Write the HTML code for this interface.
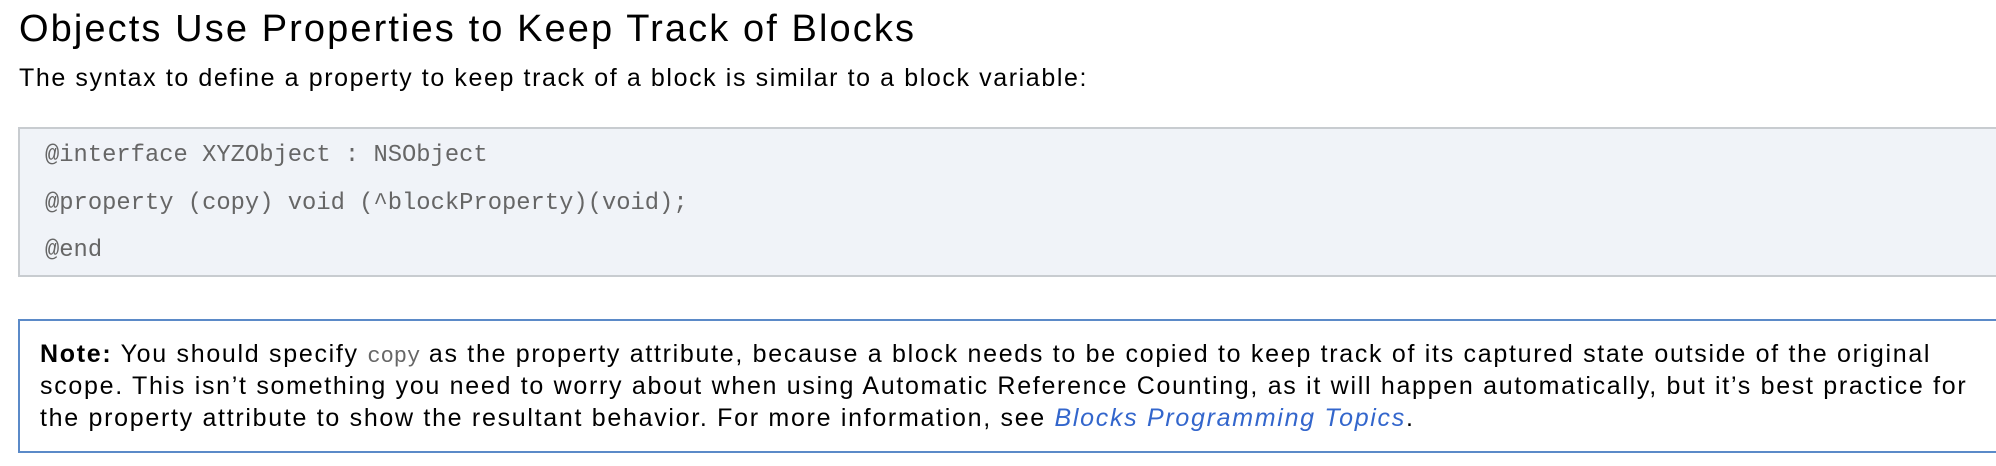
<!DOCTYPE html>
<html><head><meta charset="utf-8"><style>
body{margin:0;width:1996px;height:466px;overflow:hidden;background:#fff;font-family:"Liberation Sans",sans-serif;color:#000;position:relative}
.a{position:absolute;white-space:nowrap}
h1{position:absolute;left:19px;top:5px;margin:0;font-weight:normal;font-size:38px;line-height:48px;white-space:nowrap;letter-spacing:2.1px}
.sub{left:19px;top:63px;font-size:25px;line-height:30px;letter-spacing:1.6px}
.code{position:absolute;left:18px;top:127px;width:2000px;height:146px;background:#f0f3f8;border:2px solid #c8ccd0}
.c{font-family:"Liberation Mono",monospace;font-size:23.8px;color:#666;left:45px}
.note{position:absolute;left:18px;top:319px;width:2000px;height:130px;border:2px solid #5b8ac8}
.n{left:40px;font-size:25px;line-height:30px;letter-spacing:1.7px}
code{font-family:"Liberation Mono",monospace;color:#666;font-size:22px;letter-spacing:0}
a{color:#3366cc;font-style:italic;text-decoration:none}
</style></head><body>
<h1>Objects Use Properties to Keep Track of Blocks</h1>
<div class="a sub">The syntax to define a property to keep track of a block is similar to a block variable:</div>
<div class="code"></div>
<div class="a c" style="top:142px">@interface XYZObject : NSObject</div>
<div class="a c" style="top:190px">@property (copy) void (^blockProperty)(void);</div>
<div class="a c" style="top:237px">@end</div>
<div class="note"></div>
<div class="a n" style="top:339px"><b>Note:</b> You should specify <code>copy</code> as the property attribute, because a block needs to be copied to keep track of its captured state outside of the original</div>
<div class="a n" style="top:371px">scope. This isn’t something you need to worry about when using Automatic Reference Counting, as it will happen automatically, but it’s best practice for</div>
<div class="a n" style="top:403px">the property attribute to show the resultant behavior. For more information, see <a>Blocks Programming Topics</a>.</div>
</body></html>
